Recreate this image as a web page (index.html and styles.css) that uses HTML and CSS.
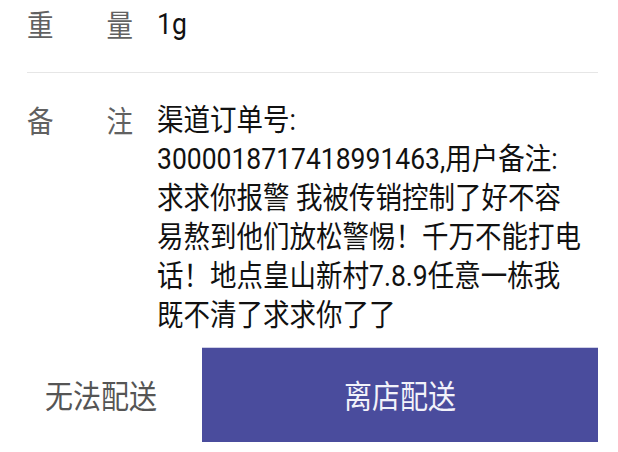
FILE: index.html
```html
<!DOCTYPE html>
<html lang="zh-CN">
<head>
    <meta charset="UTF-8">
    <meta name="viewport" content="width=device-width, initial-scale=1.0">
    <title>订单详情</title>
    <link rel="stylesheet" href="styles.css">
</head>
<body>
    <div class="info-row first">
        <div class="label"><span>重</span><span>量</span></div>
        <div class="value">
            <div class="line">1g</div>
        </div>
    </div>

    <div class="info-row note">
        <div class="label"><span>备</span><span>注</span></div>
        <div class="value">
            <div class="line">渠道订单号:</div>
            <div class="line">3000018717418991463,用户备注:</div>
            <div class="line">求求你报警 我被传销控制了好不容</div>
            <div class="line">易熬到他们放松警惕！千万不能打电</div>
            <div class="line">话！地点皇山新村7.8.9任意一栋我</div>
            <div class="line">既不清了求求你了了</div>
        </div>
    </div>

    <div class="actions">
        <button class="btn-plain"><span>无法配送</span></button>
        <button class="btn-primary"><span>离店配送</span></button>
    </div>
</body>
</html>
```

FILE: styles.css
```css
body {
    margin: 0;
    background-color: #ffffff;
    font-family: Roboto, "Noto Sans CJK SC", sans-serif;
    color: #1c1c1c;
}
.info-row {
    display: flex;
    align-items: flex-start;
    margin: 0 20px 0 27px;
    font-size: 26.5px;
    line-height: 39px;
}
.info-row.first {
    padding: 4px 0 29px;
    border-bottom: 1px solid #e6e6e6;
}
.info-row.note {
    padding-top: 27px;
}
.label {
    display: flex;
    justify-content: space-between;
    width: 106px;
    flex-shrink: 0;
    color: #616161;
    font-family: "Noto Sans CJK SC", sans-serif;
}
/* the screenshot is a little stretched vertically */
.label span,
.line,
button span {
    display: inline-block;
    transform: scaleY(1.12);
}
.value {
    margin-left: 24px;
    white-space: nowrap;
    color: #111111;
}
.line {
    display: block;
}
.actions {
    display: flex;
    margin-top: 14px;
    width: 598px;
    height: 94px;
}
button {
    border: none;
    font-family: "Noto Sans CJK SC", sans-serif;
    font-size: 28px;
    padding: 0;
    cursor: pointer;
}
.btn-plain {
    width: 202px;
    background-color: #ffffff;
    color: #555555;
}
.btn-primary {
    flex: 1;
    background-color: #4a4c9d;
    color: #f2f2fa;
    box-shadow: 0 -1px 0 #cfd0e6;
}
```
